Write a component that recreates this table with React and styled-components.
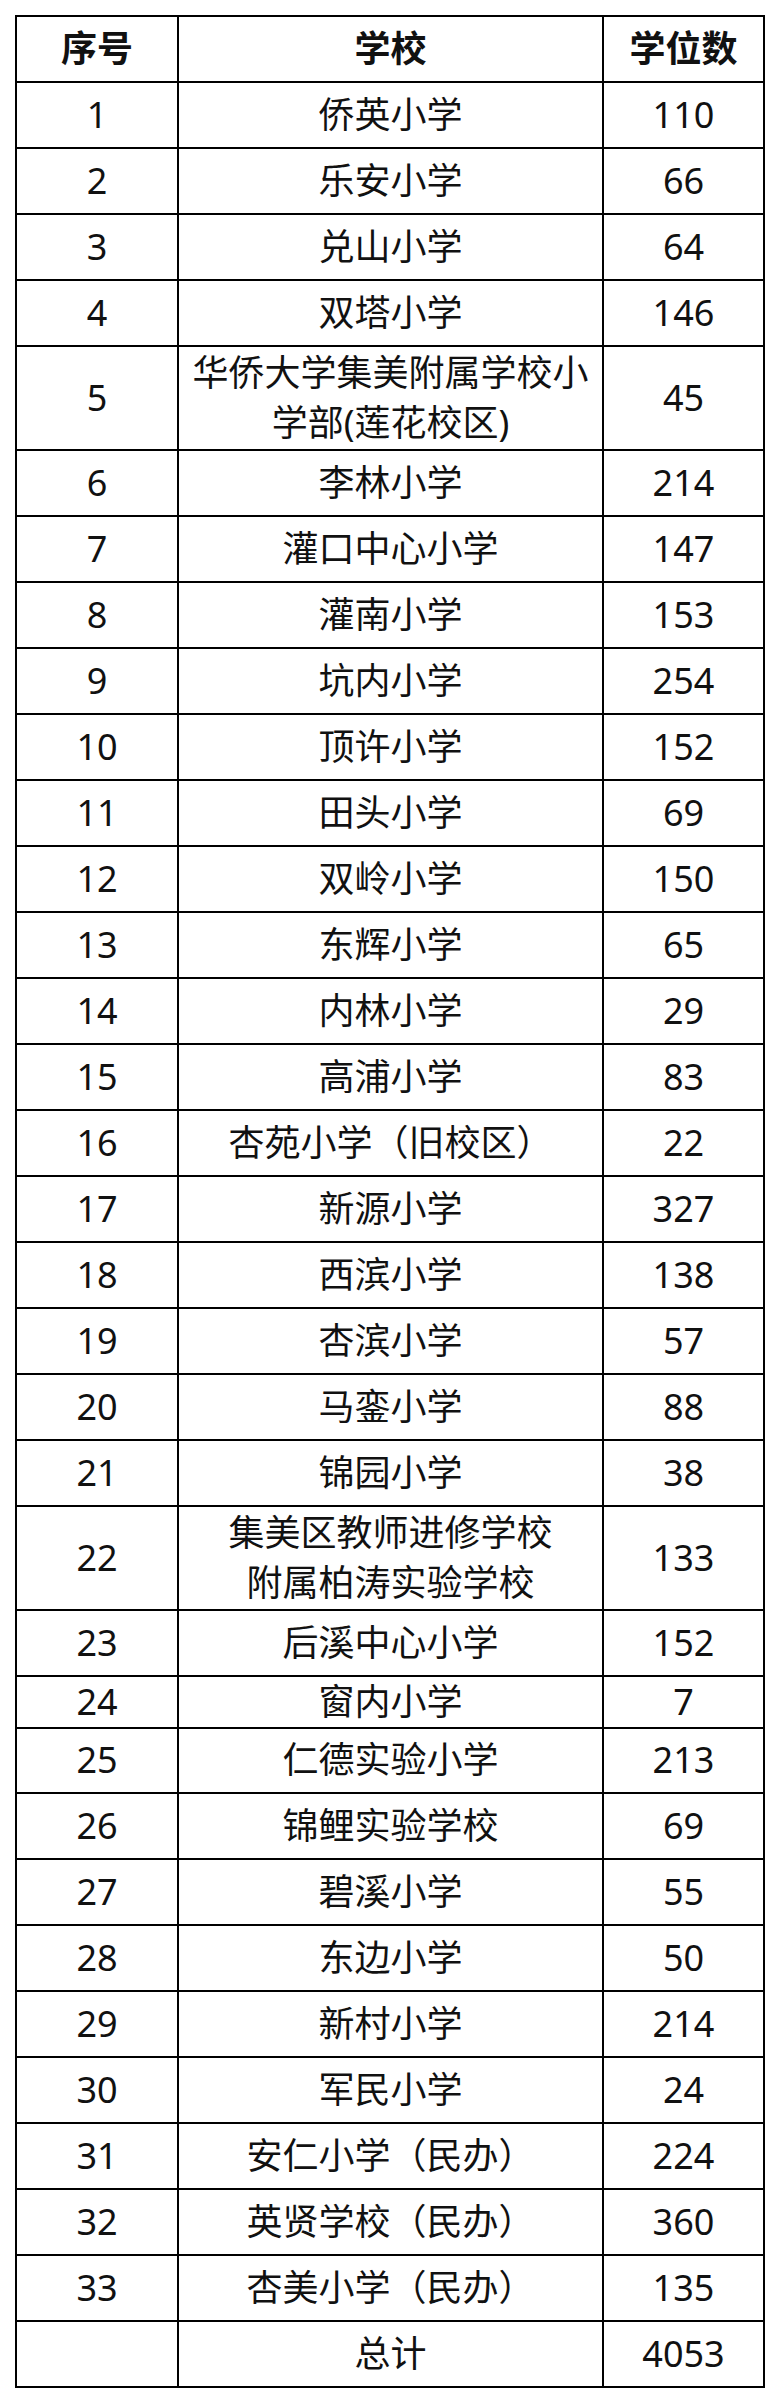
import React from "react";
import styled, { createGlobalStyle } from "styled-components";

const GlobalStyle = createGlobalStyle`
  html, body {
    margin: 0;
    padding: 0;
    background: #ffffff;
  }
  body {
    padding: 15px;
    font-family: "Noto Sans", "Noto Sans CJK SC", sans-serif;
    color: #111111;
  }
`;

const Table = styled.div`
  width: 750px;
  box-sizing: border-box;
  display: flex;
  flex-direction: column;
  border-left: 2px solid #000;
  border-top: 2px solid #000;
`;

const Row = styled.div`
  display: grid;
  grid-template-columns: 162px 425px 161px;
  height: ${(p) => p.$h}px;
`;

const Cell = styled.div`
  box-sizing: border-box;
  border-right: 2px solid #000;
  border-bottom: 2px solid #000;
  display: flex;
  align-items: center;
  justify-content: center;
  text-align: center;
  font-size: 36px;
  line-height: 50px;
  font-weight: ${(p) => (p.$head ? 700 : 400)};
  white-space: nowrap;
`;

const Line = styled.span`
  display: block;
`;

const rows = [
  ["1", ["侨英小学"], "110"],
  ["2", ["乐安小学"], "66"],
  ["3", ["兑山小学"], "64"],
  ["4", ["双塔小学"], "146"],
  ["5", ["华侨大学集美附属学校小", "学部(莲花校区)"], "45", 104],
  ["6", ["李林小学"], "214"],
  ["7", ["灌口中心小学"], "147"],
  ["8", ["灌南小学"], "153"],
  ["9", ["坑内小学"], "254"],
  ["10", ["顶许小学"], "152"],
  ["11", ["田头小学"], "69"],
  ["12", ["双岭小学"], "150"],
  ["13", ["东辉小学"], "65"],
  ["14", ["内林小学"], "29"],
  ["15", ["高浦小学"], "83"],
  ["16", ["杏苑小学（旧校区）"], "22"],
  ["17", ["新源小学"], "327"],
  ["18", ["西滨小学"], "138"],
  ["19", ["杏滨小学"], "57"],
  ["20", ["马銮小学"], "88"],
  ["21", ["锦园小学"], "38"],
  ["22", ["集美区教师进修学校", "附属柏涛实验学校"], "133", 104],
  ["23", ["后溪中心小学"], "152"],
  ["24", ["窗内小学"], "7", 51],
  ["25", ["仁德实验小学"], "213"],
  ["26", ["锦鲤实验学校"], "69"],
  ["27", ["碧溪小学"], "55"],
  ["28", ["东边小学"], "50"],
  ["29", ["新村小学"], "214"],
  ["30", ["军民小学"], "24"],
  ["31", ["安仁小学（民办）"], "224"],
  ["32", ["英贤学校（民办）"], "360"],
  ["33", ["杏美小学（民办）"], "135"],
  ["", ["总计"], "4053"],
];

export default function App() {
  return (
    <>
      <GlobalStyle />
      <Table>
        <Row $h={66}>
          <Cell $head>序号</Cell>
          <Cell $head>学校</Cell>
          <Cell $head>学位数</Cell>
        </Row>
        {rows.map(([no, name, seats, h]) => (
          <Row key={no + name[0]} $h={h || 66}>
            <Cell>{no}</Cell>
            <Cell>
              <div>
                {name.map((l) => (
                  <Line key={l}>{l}</Line>
                ))}
              </div>
            </Cell>
            <Cell>{seats}</Cell>
          </Row>
        ))}
      </Table>
    </>
  );
}
